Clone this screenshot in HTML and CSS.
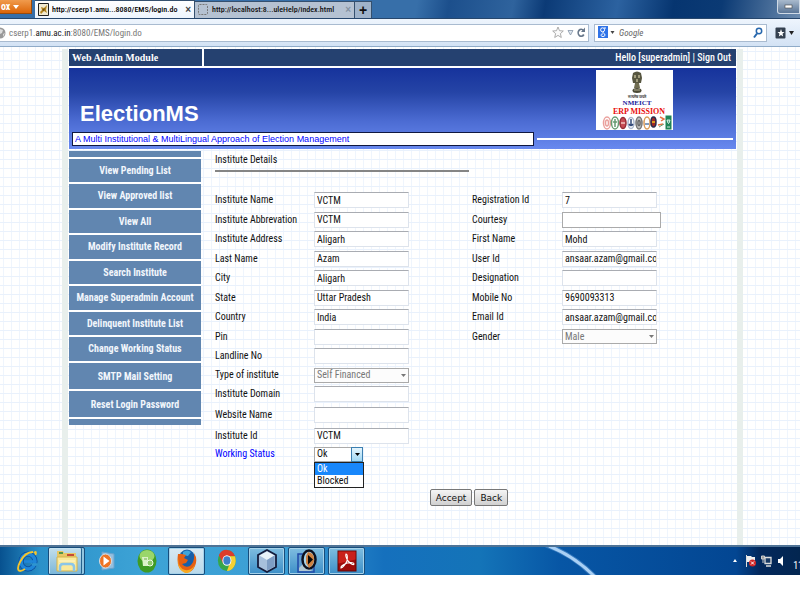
FILE: index.html
```
<!DOCTYPE html>
<html lang="en">
<head>
<meta charset="utf-8">
<title>ElectionMS</title>
<link rel="stylesheet" href="styles.css">
</head>
<body>
<header class="browser">
  <div class="tabstrip">
    <button class="appmenu">ox <svg width="6" height="4" viewBox="0 0 6 4"><path d="M0 0h6L3 4z" fill="#fff"/></svg></button>
    <div class="tab active">
      <svg width="11" height="13" viewBox="0 0 11 13"><path d="M.5.500h10v12H.5z" fill="#f1ead0" stroke="#222"/><path d="M2 9l2-2-1-3 3 1 3-3-1 5 1 3-3-2-3 3z" fill="#b3841f"/><path d="M4 7l3-2-1 3z" fill="#654a18"/></svg>
      <span class="tabtitle">http://cserp1.amu...8080/EMS/login.do</span>
      <button class="close" aria-label="Close tab">×</button>
    </div>
    <div class="tab">
      <svg width="11" height="12" viewBox="0 0 11 12"><rect x=".5" y=".5" width="9" height="10" rx="1" fill="none" stroke="#777" stroke-dasharray="2 1"/></svg>
      <span class="tabtitle">http://localhost:8...uleHelp/index.html</span>
      <button class="close" aria-label="Close tab">×</button>
    </div>
    <button class="newtab" aria-label="New tab">+</button>
    <button class="minimise" aria-label="Minimise"><svg width="10" height="5" viewBox="0 0 10 5"><rect x="1" y="1" width="7" height="3" fill="#fff" stroke="#444" stroke-width=".6"/></svg></button>
  </div>
  <div class="navbar">
    <div class="address">
      <svg width="6" height="12" viewBox="0 0 6 12"><circle cx="0" cy="6" r="5.500" fill="#999"/><path d="M0 2l3 1-1 3-2 1M3 7l2-1-2 4z" fill="#ddd"/></svg>
      <div class="url">cserp1.<b>amu.ac.in</b>:8080/EMS/login.do</div>
      <svg width="34" height="13" viewBox="0 0 34 13"><path d="M6 1l1.500 3.700 3.800.3-2.900 2.600.9 3.900L6 9.400l-3.300 2.100.9-3.900L.7 5l3.800-.3z" fill="#fafafa" stroke="#999" stroke-width=".8"/><path d="M16 4.500h5L18.500 9z" fill="#dde5ee" stroke="#8796a8" stroke-width=".8"/><path d="M31.500 4.500a3 3.500 0 1 0 .3 4" fill="none" stroke="#68788b" stroke-width="1.700"/><path d="M33 1.500V6h-4z" fill="#68788b"/></svg>
    </div>
    <label class="search">
      <svg width="17" height="13" viewBox="0 0 17 13"><rect width="10" height="12" fill="#2f73e8"/><ellipse cx="4.600" cy="3.800" rx="2" ry="2" fill="none" stroke="#fff"/><path d="M6 2h2M5 6c-1 1 2 1 2 3 0 2-4 2-4 .2C3 8 4 8 5 8" fill="none" stroke="#fff"/><path d="M12.500 5h4l-2 3z" fill="#444"/></svg>
      <input type="search" placeholder="Google" aria-label="Google search">
      <svg width="10" height="12" viewBox="0 0 10 12"><circle cx="6" cy="4" r="2.700" fill="#fff" stroke="#2767ad" stroke-width="1.500"/><path d="M4 6.500L1 10.500" stroke="#2767ad" stroke-width="2"/></svg>
    </label>
    <button class="bookmarks" aria-label="Bookmarks"><svg width="20" height="12" viewBox="0 0 20 12"><rect x=".5" y=".5" width="10" height="11" rx="1" fill="#34404f"/><path d="M6 2l1 3h2.500l-2 1.700.7 2.800L6 8 3.800 9.500l.7-2.800-2-1.700H5z" fill="#fff"/><path d="M14 4h5l-2.500 4z" fill="#222"/></svg></button>
  </div>
</header>

<main class="desk">
  <div class="site">
    <div class="topbar">
      <strong class="module">Web Admin Module</strong>
      <div class="user">Hello [superadmin] | <a href="#">Sign Out</a></div>
    </div>
    <div class="hero">
      <div class="brand">
        <h1>ElectionMS</h1>
        <svg class="logo" width="77" height="60" viewBox="0 0 77 60" role="img" aria-label="NMEICT ERP Mission">
          <rect width="77" height="60" fill="#fff"/>
          <path d="M37 3q4-3 8 0l1 5-1 5h-8l-1-5z" fill="#575640"/><path d="M38 5h2v3h-2zM42 5h2v3h-2zM40 9h2v3h-2z" fill="#a19d7d"/><path d="M39 13h4l1 5h-6z" fill="#706d50"/><ellipse cx="41" cy="20.500" rx="4.500" ry="2.500" fill="#4b4935"/><path d="M38 20h6" stroke="#b5b191"/>
          <text x="41" y="28" class="motto">सत्यमेव जयते</text>
          <text x="41" y="35" class="nm">NMEICT</text>
          <text x="43" y="44" class="erp">ERP MISSION</text>
          <g fill="#fff" stroke-width="1.500">
            <ellipse cx="11" cy="53" rx="3.500" ry="6" stroke="#eaa09c"/><ellipse cx="11" cy="53" rx="1.500" ry="3" stroke="#eaa09c"/>
            <ellipse cx="19" cy="53" rx="3.500" ry="6" stroke="#659b70"/><path d="M19 49v8M17 52h4" stroke="#659b70"/>
            <ellipse cx="27" cy="53" rx="3" ry="5.500" fill="#c64b52" stroke="#972d35"/><path d="M25 53h4" stroke="#f3c4c0"/>
            <ellipse cx="35" cy="53" rx="3" ry="5.500" stroke="#aab7ce"/><path d="M35 49v7M33 54q2 3 4 0" fill="none" stroke="#304878"/>
            <ellipse cx="43" cy="53" rx="3" ry="6" fill="#bbb" stroke="#777"/><ellipse cx="43" cy="53" rx="1" ry="2.500" stroke="#666"/>
            <ellipse cx="51" cy="53" rx="3" ry="6" stroke="#d99a58"/><path d="M49 54h4" stroke="#5b7ca8"/>
            <ellipse cx="57.500" cy="52" rx="2.500" ry="5" fill="#a12825" stroke="#292b4c"/><path d="M56 52h3" stroke="#f2c11c"/>
          </g>
          <path d="M64 47l4 2-3 2M62 55l5-1" stroke="#e57445" fill="none" stroke-width="1.500"/><path d="M63 57l5-3" stroke="#67a072"/>
          <rect x="69.500" y="45.500" width="6" height="14" fill="#208558"/><path d="M71 50q1.500 7 3 0zM71 57h3" stroke="#fff" stroke-width=".8" fill="#55a47f"/>
        </svg>
      </div>
      <div class="tagrow"><div class="tagline">A Multi Institutional &amp; MultiLingual Approach of Election Management</div><div class="rule"></div></div>
    </div>
    <div class="columns">
      <nav class="menu">
        <span class="cap"></span>
        <a href="#">View Pending List</a>
        <a href="#">View Approved list</a>
        <a href="#">View All</a>
        <a href="#">Modify Institute Record</a>
        <a href="#">Search Institute</a>
        <a href="#">Manage Superadmin Account</a>
        <a href="#">Delinquent Institute List</a>
        <a href="#">Change Working Status</a>
        <a href="#" class="tall">SMTP Mail Setting</a>
        <a href="#" class="tall">Reset Login Password</a>
        <span class="cap"></span>
      </nav>
      <form class="details">
        <h2>Institute Details</h2>
        <div class="groups">
          <div class="fields">
            <label for="name">Institute Name</label><input id="name" value="VCTM">
            <label for="abbr">Institute Abbrevation</label><input id="abbr" value="VCTM">
            <label for="addr">Institute Address</label><input id="addr" value="Aligarh">
            <label for="last">Last Name</label><input id="last" value="Azam">
            <label for="city">City</label><input id="city" value="Aligarh">
            <label for="state">State</label><input id="state" value="Uttar Pradesh">
            <label for="country">Country</label><input id="country" value="India">
            <label for="pin">Pin</label><input id="pin">
            <label for="land">Landline No</label><input id="land">
            <label for="type">Type of institute</label>
            <div class="pick"><select id="type" disabled><option>Self Financed</option></select><svg class="arrow" width="5" height="3" viewBox="0 0 5 3"><path d="M0 0h5L2.500 3z" fill="#777"/></svg></div>
            <label for="domain">Institute Domain</label><input id="domain">
            <label for="site">Website Name</label><input id="site">
            <label for="iid">Institute Id</label><input id="iid" value="VCTM">
            <label for="status" class="blue">Working Status</label>
            <div class="pick open"><select id="status"><option>Ok</option><option>Blocked</option></select><span class="drop"><svg width="5" height="3" viewBox="0 0 5 3"><path d="M0 0h5L2.500 3z" fill="#000"/></svg></span>
              <ul class="options"><li class="on">Ok</li><li>Blocked</li></ul></div>
          </div>
          <div class="fields second">
            <label for="reg">Registration Id</label><input id="reg" value="7">
            <label for="court">Courtesy</label><input id="court" class="boxed">
            <label for="first">First Name</label><input id="first" value="Mohd">
            <label for="user">User Id</label><input id="user" value="ansaar.azam@gmail.co">
            <label for="desig">Designation</label><input id="desig">
            <label for="mob">Mobile No</label><input id="mob" value="9690093313">
            <label for="mail">Email Id</label><input id="mail" value="ansaar.azam@gmail.co">
            <label for="gender">Gender</label>
            <div class="pick"><select id="gender" disabled><option>Male</option></select><svg class="arrow" width="5" height="3" viewBox="0 0 5 3"><path d="M0 0h5L2.500 3z" fill="#777"/></svg></div>
          </div>
        </div>
        <div class="actions"><button type="button">Accept</button><button type="button">Back</button></div>
      </form>
    </div>
  </div>
</main>

<footer class="taskbar">
  <svg class="streak" width="100" height="29" viewBox="0 0 100 29"><path d="M2-2Q30 8 52 31" fill="none" stroke="#8fc0f0" stroke-width="5" opacity=".35"/><path d="M5-1Q32 10 52 31" fill="none" stroke="#a9d0f5" stroke-width="3"/></svg>
  <button class="app" aria-label="Internet Explorer"><svg width="22" height="24" viewBox="0 0 22 24"><ellipse cx="12" cy="12.500" rx="7" ry="7.500" fill="none" stroke="#0a4a9c" stroke-width="5"/><ellipse cx="12" cy="12.500" rx="7" ry="7.500" fill="none" stroke="#1f86d8" stroke-width="3.600"/><path d="M8 12.500h12" stroke="#1f86d8" stroke-width="2.600"/><path d="M15 14.200h6.500v2.600h-5z" fill="#2f95cf"/><path d="M18 4q3-3 1.500 2M17 3Q9 3 4 13q-4 8 0 9 2 0 5-2" fill="none" stroke="#f4c52e" stroke-width="1.800"/></svg></button>
  <button class="app framed stacked" aria-label="Explorer"><svg width="22" height="23" viewBox="0 0 22 23"><path d="M1 4V1h6l1 2h12v18H1z" fill="#e8c765"/><path d="M3 2h4v2H3z" fill="#52954b"/><path d="M11 4h7v2h-7z" fill="#c64935"/><path d="M1 7h20v14H1z" fill="#fae99b" stroke="#d3b34f"/><path d="M3 11h16M3 14h16" stroke="#fff7cf"/><path d="M4 21v-4q0-3 3-3h8q3 0 3 3v4" fill="none" stroke="#8bc6e9" stroke-width="2.500"/></svg></button>
  <button class="app" aria-label="Media Player"><svg width="18" height="20" viewBox="0 0 18 20"><path d="M4 1l12 2v14L4 19z" fill="#93bfdf" stroke="#69a3ce"/><ellipse cx="7.500" cy="10" rx="6" ry="7" fill="#ee7424" stroke="#d5dde4"/><path d="M5.500 5.500v9l6-4.500z" fill="#fff"/></svg></button>
  <button class="app" aria-label="Green application"><svg width="20" height="24" viewBox="0 0 20 24"><ellipse cx="10" cy="12" rx="9.500" ry="11.500" fill="#3f9b24"/><ellipse cx="10" cy="7" rx="7.500" ry="6" fill="#9ad66a"/><path d="M5 8h6v9H6z" fill="#dcf2c8"/><circle cx="13" cy="14" r="3" fill="#8fc96b" stroke="#eef9e6"/><path d="M7 10h3" stroke="#6fae4c"/></svg></button>
  <button class="app framed current" aria-label="Firefox"><svg width="20" height="24" viewBox="0 0 20 24"><ellipse cx="10" cy="11" rx="8.500" ry="10.500" fill="#185fa8"/><path d="M6 3q4-3 8 0l-3 4-5-1z" fill="#3fa5dc"/><path d="M1 5q-2 14 5 17 8 4 12-5 3-7-1-13 1 9-4 13-5 2-8-2l4-1 2-3-4-2 2-3-4-1z" fill="#e66012"/><path d="M1 9q0 10 7 12 7 1 10-6-3 10-10 9Q0 21 1 9z" fill="#f8aa22"/></svg></button>
  <button class="app" aria-label="Chrome"><svg width="20" height="24" viewBox="0 0 20 24"><g transform="scale(.9 1.050)"><circle cx="11" cy="11" r="10" fill="#36a64a"/><path d="M2 6a10 10 0 0 1 18 1H11L7 14z" fill="#dc3c2c"/><path d="M20 7a10 10 0 0 1-9 14l4-9-3-5z" fill="#f6d033"/><circle cx="11" cy="11" r="5" fill="#fff"/><circle cx="11" cy="11" r="4" fill="#3b7fcb"/></g></svg></button>
  <button class="app framed" aria-label="NetBeans"><svg width="20" height="24" viewBox="0 0 20 24"><path d="M10 1l9 5v12l-9 5-9-5V6z" fill="#a7c0dc" stroke="#141c3c" stroke-width="1.800"/><path d="M10 2.500L17.500 6.500 10 11 2.500 6.500z" fill="#e8f2f8"/><path d="M10 11v10.500l7.500-4v-11z" fill="#7e9dc4"/></svg></button>
  <button class="app framed" aria-label="Eye application"><svg width="20" height="24" viewBox="0 0 20 24"><rect x="1" y="5" width="16" height="18" fill="#5e9bd0" stroke="#1f4aa8" stroke-width="1.500"/><path d="M2 19l5-5 8 8H2z" fill="#b0c7d2"/><ellipse cx="12" cy="10.500" rx="6.500" ry="9" fill="#a9d3e8" stroke="#0b1020" stroke-width="2.500"/><path d="M11 3q7 1 6 9-1 5-5 7l-3-5V7z" fill="#cc8143"/><path d="M11 6l5 4.500-5 5z" fill="#080808"/></svg></button>
  <button class="app framed" aria-label="Acrobat Reader"><svg width="20" height="22" viewBox="0 0 20 22"><rect x="1" y="1" width="18" height="20" fill="#9d0b0b" stroke="#5c0707"/><path d="M1.500 1.500h17v8l-17 4z" fill="#c9201b"/><path d="M9 4q2 0 1 7-3 6-6 7-1-2 6-5 7-1 7 1-1 2-6-3-3-5-2-7z" fill="none" stroke="#fff" stroke-width="1.100"/></svg></button>
  <div class="tray">
    <svg width="52" height="14" viewBox="0 0 52 14"><path d="M1 8l2-3 2 3z" fill="#fff"/><path d="M14.500 1v12" stroke="#ddd"/><path d="M15 2h4l1 1h3v5h-8z" fill="#eee"/><circle cx="20.500" cy="9" r="3.500" fill="#d22626"/><path d="M19 7.500l3 3m0-3l-3 3" stroke="#fff"/><path d="M33 3.500h6v6h-6zM34 12h5" fill="#173863" stroke="#ddd" stroke-width="1.300"/><path d="M29.500 2h3v3h-3zM31 5v4" fill="#999" stroke="#ccc"/><path d="M46 5h2l3-3v10l-3-3h-2z" fill="#fff"/></svg>
    <span class="clock">11</span>
  </div>
</footer>
</body>
</html>
```
FILE: styles.css
```
* { box-sizing: border-box; }
body { margin: 0; background: #fff; color: #111; font: 10px/12px "Roboto Condensed", "Liberation Sans", Arial, sans-serif; overflow: hidden; }
button { padding: 0; border: 0; background: none; font: inherit; color: inherit; }
svg { display: block; flex: none; }
a { color: inherit; text-decoration: none; }

.tabstrip { display: flex; align-items: flex-end; height: 19px; background: linear-gradient(100deg, #376fa9 0 52%, #1c4f8c 56%, #2f639d 64%, #0b3a76 68%, #2c62a0 77%, #063570 84%, #0b3a74 90%, #6d8caf); border-bottom: 1px solid #27476d; }
.appmenu { align-self: flex-start; display: flex; align-items: center; justify-content: space-between; width: 32px; height: 14px; padding: 0 12px 0 1px; background: linear-gradient(#f09b4d, #dc6508); border: 1px solid #9b4b0c; border-width: 0 1px 1px 0; color: #fff; font-weight: bold; }
.tab { display: flex; align-items: center; gap: 3px; width: 160px; height: 17px; padding: 0 3px; background: #b5c2d2; border: 1px solid #35506e; border-width: 1px 1px 0 0; color: #111; font-size: 8px; font-weight: 500; }
.tab.active { height: 18px; margin-left: 3px; background: linear-gradient(#fff, #eef5fd); color: #000; }
.tabtitle { flex: 1; white-space: nowrap; }
.close { font: bold 10px/12px "Liberation Sans", sans-serif; color: #444; }
.tab:not(.active) .close { color: #8593a3; }
.newtab { width: 17px; height: 17px; background: #9fb3ca; border: 1px solid #35506e; border-width: 1px 1px 0 0; font: bold 14px/14px "Liberation Sans", sans-serif; }
.minimise { align-self: flex-start; display: flex; align-items: center; justify-content: center; width: 23px; height: 14px; margin-left: auto; background: linear-gradient(#a9bacd, #5b7697); border: 1px solid #cfdae6; border-top: 0; border-radius: 0 0 0 3px; }
.navbar { display: flex; align-items: center; gap: 5px; height: 28px; padding-right: 5px; background: linear-gradient(#eef5fd, #d3e2f4); border-bottom: 1px solid #8fabc8; }
.address, .search { display: flex; align-items: center; height: 18px; background: #fff; border: 1px solid #a9bbd0; color: #777; }
.address { flex: 1; padding-right: 2px; gap: 3px; border-left: 0; }
.url { flex: 1; font-size: 9px; }
.url b { color: #111; font-weight: normal; }
.search { width: 173px; padding: 0 3px; gap: 4px; }
.search input { flex: 1; min-width: 0; border: 0; padding: 0; background: none; font: italic 9px/14px "Roboto Condensed", sans-serif; }
.search input::placeholder { color: #666; }
.bookmarks { margin: 0 0 0 3px; }

.desk { padding: 2px 57px 0 62px; background-color: #fff; background-image: linear-gradient(#e9f1fc 1px, transparent 1px), linear-gradient(90deg, #eff5fd 1px, transparent 1px); background-size: 100% 9px, 8px 100%; background-position: 0 4px, 3px 0; }
.site { min-height: 496px; padding: 0 1px; border: solid #e8efec; border-width: 0 6px; }
.topbar { display: flex; gap: 2px; color: #fff; border-bottom: 2px solid #fff; background: #fff; }
.module { width: 133px; padding-left: 3px; background: #254170; font: bold 10px/17px "Liberation Serif", serif; }
.user { flex: 1; padding-right: 5px; background: #254170; text-align: right; font-weight: 500; line-height: 17px; }
.hero { padding: 2px 3px 3px; background: linear-gradient(#16339c, #2544a6 30%, #4b6bd2 65%, #6889ef); }
.brand { display: flex; justify-content: space-between; padding: 0 60px 0 8px; }
h1 { margin: 31px 0 0; color: #fff; font: bold 22px/26px "Liberation Sans", sans-serif; }
.tagrow { display: flex; align-items: center; gap: 3px; margin-top: 2px; }
.tagline { flex: 7; padding-left: 2px; border: 1px solid #101840; background: #fff; color: #00f; font: 9px/12px "Liberation Sans", sans-serif; }
.rule { flex: 3; height: 2px; background: #fff; }
.logo text { text-anchor: middle; font-family: "Liberation Serif", serif; font-weight: bold; }
.motto { font-size: 4px; fill: #333; }
.nm { font-size: 7px; fill: #1a1a9c; }
.logo .erp { font-size: 8px; fill: #e80d0d; }

.columns { display: flex; padding-top: 2px; }
.menu { display: flex; flex-direction: column; gap: 2px; width: 132px; background: #fff; align-self: flex-start; }
.menu a, .cap { background: #6186b0; }
.menu a { height: 23px; color: #f2f6fc; font-weight: bold; text-align: center; line-height: 24px; }
.menu a:nth-child(odd) { height: 24px; }
.menu a.tall { height: 26px; line-height: 27px; }
.cap { height: 6px; }
.details { flex: 1; padding-left: 1px; }
h2 { width: 254px; margin: 3px 0 18px 13px; padding-bottom: 4px; border-bottom: 2px solid #858585; font: inherit; }
.groups { display: flex; gap: 63px; margin-left: 13px; }
.fields { display: grid; grid-template-columns: 99px 95px; grid-template-rows: 20px 19px 20px 19px 20px 19px 20px 19px 20px 18px 19px 23px 19px 18px; align-items: center; }
.second { grid-template-columns: 90px 95px; }
.fields input, .fields select { width: 95px; height: 16px; margin: 0; padding: 0 0 0 2px; border: 1px solid #dde3ec; border-top-color: #a9acb2; border-radius: 0; background: #fff; color: #111; font: inherit; }
.fields .boxed { width: 99px; border-color: #aaa; }
.pick { position: relative; display: flex; }
.fields select { height: 15px; border-color: #aaa; appearance: none; }
.fields select:disabled { color: #777; opacity: 1; background: #fcfcfc; }
.arrow { position: absolute; right: 3px; top: 6px; }
.blue { color: #00f; }
.fields .open select { width: 49px; }
.drop { position: absolute; left: 37px; top: 0; display: flex; align-items: center; justify-content: center; width: 12px; height: 15px; background: linear-gradient(#e5f5fd, #a0d7f3); border: 1px solid #3c7fb1; pointer-events: none; }
.options { position: absolute; left: 0; top: 15px; width: 50px; margin: 0; padding: 0; border: 1px solid #222; background: #fff; list-style: none; }
.options li { padding-left: 2px; }
.options .on { background: #1887fb; color: #fff; }
.actions { display: flex; justify-content: center; gap: 2px; margin-top: 26px; }
.actions button { height: 17px; padding: 0 5px; border: 1px solid #777; border-radius: 2px; background: linear-gradient(#f5f5f5, #d0d0d0); font: 9px/14px "DejaVu Sans", sans-serif; }

.taskbar { position: relative; display: flex; align-items: center; height: 30px; padding-left: 8px; border-top: 2px solid #4f7396; background: linear-gradient(90deg, #07518f, #2b91c9 5%, #3da3d6 18%, #3c9fd5 35%, #1570bd 48%, #1474b8 60%, #0756a5 70%, #034692 92%, #03285c 95%, #032650); overflow: hidden; }
.streak { position: absolute; left: 68%; top: 0; }
.app { display: flex; align-items: center; justify-content: center; width: 37px; height: 28px; margin-right: 3px; border: 1px solid transparent; border-radius: 2px; }
.framed { border-color: #174d7c; background: linear-gradient(#7fbde0, #3c8fc8); box-shadow: inset 0 0 0 1px #a5d2ea; }
.stacked { box-shadow: inset -2px 0 #92c5df, inset -3px 0 #24628e, inset 1px 1px #c5e3f2; background: linear-gradient(#c3deeb, #7bb7da); }
.current { background: linear-gradient(#d8e9f3, #b9d9ea); }
.tray { display: flex; align-items: center; gap: 9px; margin-left: auto; color: #fff; }
.clock { align-self: flex-end; margin: 10px -3px 0 0; font-size: 10px; }
```
